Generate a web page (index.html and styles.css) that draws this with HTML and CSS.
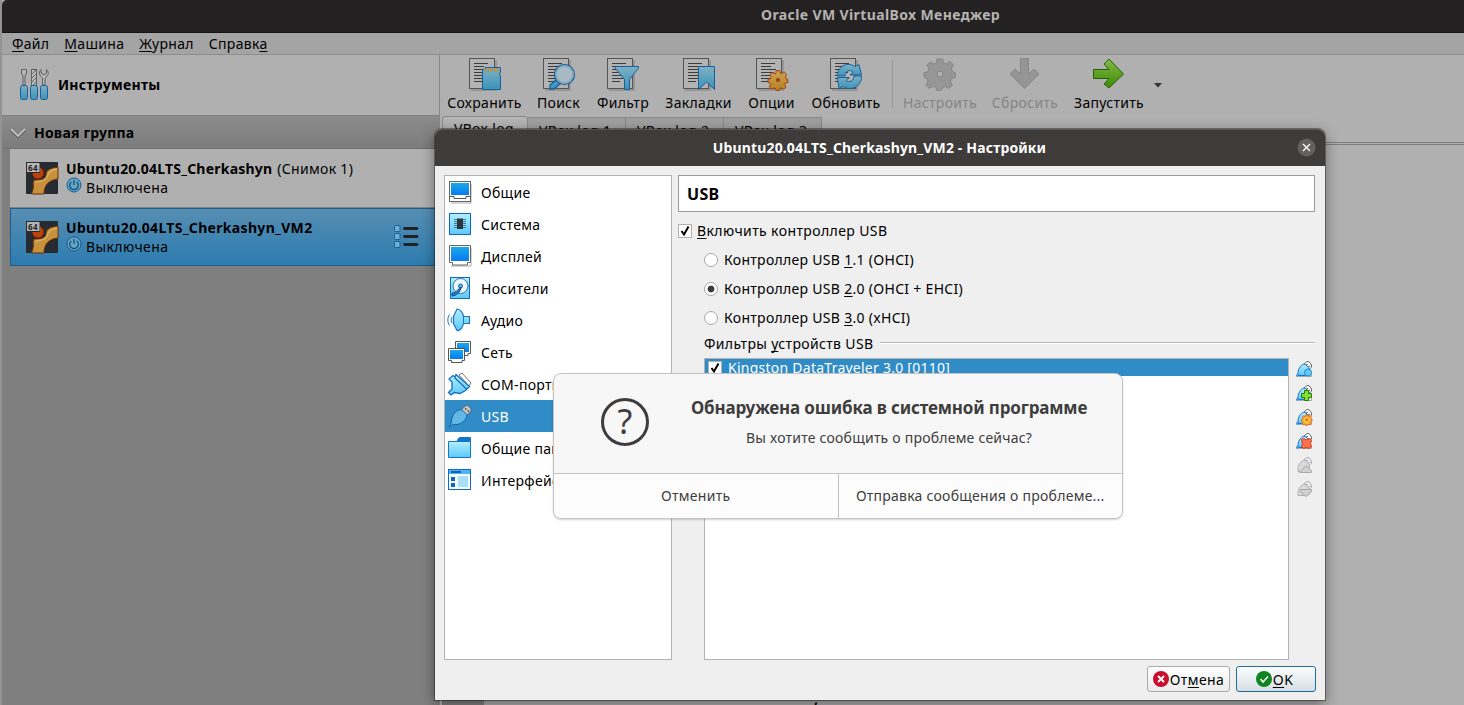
FILE: index.html
```html
<!DOCTYPE html>
<html lang="ru">
<head>
<meta charset="utf-8">
<title>Oracle VM VirtualBox Менеджер</title>
<link rel="stylesheet" href="styles.css">
</head>
<body>
<svg class="defs" width="0" height="0" aria-hidden="true">
  <defs>
    <linearGradient id="steel" x1="0" y1="0" x2="0" y2="1"><stop offset="0" stop-color="#7fb0c4"/><stop offset="1" stop-color="#3a94b8"/></linearGradient>
    <linearGradient id="sky" x1="0" y1="0" x2="0" y2="1"><stop offset="0" stop-color="#b4efff"/><stop offset="1" stop-color="#5cc8fa"/></linearGradient>
    <linearGradient id="screen" x1="0" y1="0" x2="0" y2="1"><stop offset="0" stop-color="#19a9e9"/><stop offset="1" stop-color="#0879f4"/></linearGradient>
    <linearGradient id="leaf" x1="0" y1="0" x2="0" y2="1"><stop offset="0" stop-color="#83b944"/><stop offset="1" stop-color="#3c8b06"/></linearGradient>
    <linearGradient id="gold" x1="0" y1="0" x2="0" y2="1"><stop offset="0" stop-color="#c9a45a"/><stop offset="1" stop-color="#b97f1e"/></linearGradient>
    <g id="doc">
      <path d="M3 33H28V3" fill="none" stroke="#8d8d8d" stroke-width="1.5"/>
      <rect x="1.5" y="1.500" width="25" height="30" fill="#b3b3b3" stroke="#555"/>
      <path d="M6 6.500H20M6 9.500H16M6 12.500H21M6 15.500H19M6 18.500H16M6 21.500H20M6 24.500H14" stroke="#3c3c3c"/>
    </g>
    <g id="plug">
      <path d="M3 15.500H15.500V13" stroke="#aaa" fill="none"/>
      <path d="M8 3L11 .6H13L15.500 4V6L13 8.500Z" fill="#fff" stroke="#666"/>
      <path d="M10.500 3.500h1.200M12.500 5.500h1.200" stroke="#222"/>
      <path d="M2 14C1.500 9 4 4.500 8 3C10.500 4 12.500 6 13.500 8.500V13L11 14.500H2Z" fill="url(#sky)" stroke="#1c6fc4"/>
      <circle cx="1.500" cy="14.500" r="1" fill="#64c8fa" stroke="#1c6fc4"/>
    </g>
    <g id="plug-off">
      <path d="M8 3L11 .6H13L15.500 4V6L13 8.500Z" fill="#f0f0f0" stroke="#aaa"/>
      <path d="M10.500 3.500h1.200M12.500 5.500h1.200" stroke="#888"/>
      <path d="M2 14C1.500 9 4 4.500 8 3C10.500 4 12.500 6 13.500 8.500V13L11 14.500H2Z" fill="#dadada" stroke="#b0b0b0"/>
    </g>
    <g id="os">
      <rect width="32" height="32" rx="1" fill="#262a31"/>
      <circle cx="12" cy="11" r="6" fill="#b9430d" stroke="#5d1c08"/>
      <path d="M32 5C24 6 20 8 20 13C20 17 15 18 8 18L7 21C8 24 7 28 5.500 32H18C18 24 22 18 32 17Z" fill="#c5913b" stroke="#6e2b0b"/>
      <path d="M31 7C25 8 22 10 21.500 14C20 18 15 20 9 20" fill="none" stroke="#d9b064" stroke-width="1.500"/>
      <rect x="0" y="0" width="14" height="11" fill="#262a31"/><rect x="1" y="1" width="12.500" height="9" fill="#b5b5b5"/>
      <text x="2" y="8.500" class="bits">64</text>
    </g>
    <g id="power">
      <circle cx="8" cy="8" r="7" fill="#65a7c6" stroke="#175a9a"/>
      <path d="M5.300 5A4.300 4.300 0 1 0 10.700 5M8 3V8" fill="none" stroke="#174f73" stroke-width="1.300"/>
    </g>
    <path id="cog" d="M13 1h6l1 4 3 1 3-3 4 4-2 4 1 3 3 1v5l-4 1-1 3 2 4-4 3-3-2-3 1-1 3h-5l-1-3-3-1-4 2-3-4 2-3-1-3-3-1v-5l4-1 1-3-2-4 4-3 3 2 3-1Z"/>
  </defs>
</svg>

<div class="manager">
  <div class="manager-title">Oracle VM VirtualBox Менеджер</div>
  <nav class="menubar">
    <span><u>Ф</u>айл</span><span><u>М</u>ашина</span><span><u>Ж</u>урнал</span><span>Справк<u>а</u></span>
  </nav>
  <div class="work">
    <aside class="machines">
      <div class="tools-row">
        <svg class="tools-icon" width="32" height="34" viewBox="0 0 32 34">
          <g fill="#b8b8b8" stroke="#5f5f5f"><path d="M2.500 1.500H7.500V5L6 8V17H4V8L2.500 5Z"/><rect x="12.500" y="1.500" width="5" height="16"/><path d="M22 1.500C19 5 21 8 23.500 10V17H26V10C30 7 30 4 27.500 1.500V5L25 7L22 5Z"/></g>
          <path d="M13 6L17 2M13 10L17 6M13 14L17 10M14 17L17 14" stroke="#666" fill="none"/>
          <g fill="url(#steel)" stroke="#1b5da0"><rect x="1.500" y="17.500" width="7" height="14" rx="2"/><rect x="11.500" y="17.500" width="7" height="14" rx="2"/><rect x="21.500" y="17.500" width="7" height="14" rx="2"/></g>
        </svg>
        <b>Инструменты</b>
      </div>
      <div class="group-head">
        <svg width="16" height="11" viewBox="0 0 16 11"><path d="M1 2.500L8 9.500L15 2.500" fill="none" stroke="#555" stroke-width="3"/><path d="M1 2L8 9L15 2" fill="none" stroke="#c4c4c4" stroke-width="1.800"/></svg>
        <b>Новая группа</b>
      </div>
      <div class="vm">
        <svg width="32" height="32"><use href="#os"/></svg>
        <div class="vm-text"><div class="vm-name"><b>Ubuntu20.04LTS_Cherkashyn</b><span>(Снимок 1)</span></div>
        <div class="vm-state"><svg width="16" height="16"><use href="#power"/></svg><span>Выключена</span></div></div>
      </div>
      <div class="vm vm-active">
        <svg width="32" height="32"><use href="#os"/></svg>
        <div class="vm-text"><div class="vm-name"><b class="vm2">Ubuntu20.04LTS_Cherkashyn_VM2</b></div>
        <div class="vm-state"><svg width="16" height="16"><use href="#power"/></svg><span>Выключена</span></div></div>
        <svg class="list-icon" width="26" height="26" viewBox="0 0 26 26"><g fill="#6db0d2" stroke="#185d98"><rect x="1.500" y="1.500" width="5.500" height="6" rx="1"/><rect x="1.500" y="9.500" width="5.500" height="6" rx="1"/><rect x="1.500" y="17.500" width="5.500" height="6" rx="1"/></g><path d="M11.500 4.500H24M11.500 12.500H24M11.500 20.500H24" stroke="#222" stroke-width="2.800" stroke-linecap="round"/></svg>
      </div>
    </aside>
    <main class="viewer">
      <div class="toolbar">
        <div class="tool t1"><svg width="34" height="34"><use href="#doc"/><path d="M17 10.500H32.500V15L31.500 17L32.500 19V32.500H14.500V13Z" fill="url(#steel)" stroke="#1b5da0"/><path d="M17.500 11v4M20.500 11v4M23.500 11v4M26.500 11v4M29.500 11v4" stroke="#c58a2d" stroke-width="1.500"/></svg><span>Сохранить</span></div>
        <div class="tool t2"><svg width="34" height="34"><use href="#doc"/><path d="M15 22L8 28V32H12L19 26Z" fill="#3f99bd" stroke="#1b5da0" stroke-width="1.300"/><circle cx="22.500" cy="17.500" r="10" fill="#a8b9c1" stroke="#1b5da0" stroke-width="1.200"/><circle cx="22.500" cy="17.500" r="8.500" fill="none" stroke="#79aabd" stroke-width="1.500"/></svg><span>Поиск</span></div>
        <div class="tool t3"><svg width="34" height="34"><use href="#doc"/><path d="M9 9.500H32.500V11L23.500 22.500V32.500H18.500V22.500L9 11Z" fill="url(#steel)" stroke="#1b5da0"/></svg><span>Фильтр</span></div>
        <div class="tool t4"><svg width="34" height="34"><use href="#doc"/><path d="M16.500 9.500H32.500V32.500L24.500 25L16.500 32.500Z" fill="url(#steel)" stroke="#1b5da0"/></svg><span>Закладки</span></div>
        <div class="tool t5"><svg width="34" height="34"><use href="#doc"/><use href="#cog" transform="translate(13 13) scale(.62)" fill="url(#gold)" stroke="#a4400d" stroke-width="1.600"/><circle cx="23" cy="23" r="2" fill="#9c3b0b"/></svg><span>Опции</span></div>
        <div class="tool t6"><svg width="34" height="34"><use href="#doc"/><path d="M8.500 19C8 10 18 4 26 9.500L30 7.500L32.500 18H21L24 15C21 12 16 14 16 19Z" fill="url(#steel)" stroke="#1b5da0"/><path d="M32.500 19C33 29 22 35 14 29.500L10 32L8.500 20.500H20L17 23.500C20 26 25 24 25 19Z" fill="url(#steel)" stroke="#1b5da0"/></svg><span>Обновить</span></div>
        <i class="tool-sep"></i>
        <div class="tool t7 off"><svg width="34" height="34"><use href="#cog" transform="translate(1 1) scale(.98)" fill="#969696" stroke="#858585"/><circle cx="17" cy="17" r="3" fill="#b0b0b0" stroke="#828282"/></svg><span>Настроить</span></div>
        <div class="tool t8 off"><svg width="34" height="34"><path d="M12.500 1.500H20.500V17L26 12L31 17L16.500 31.500L2 17L7 12L12.500 17Z" fill="#959595" stroke="#868686"/></svg><span>Сбросить</span></div>
        <div class="tool t9"><svg width="34" height="34"><path d="M1.500 12.500H17L12 7L17 2L31.500 17L17 31L12 27L17 21.500H1.500Z" fill="url(#leaf)" stroke="#276103"/></svg><span>Запустить</span></div>
        <svg class="drop" width="8" height="5"><path d="M0 0H8L4 4.500Z" fill="#333"/></svg>
      </div>
      <div class="tabs"><span class="tab tab-on">VBox.log</span><span class="tab">VBox.log.1</span><span class="tab">VBox.log.2</span><span class="tab">VBox.log.3</span></div>
      <div class="pane"><div class="log"><div class="gutter"></div><span class="log-line">,</span></div></div>
    </main>
  </div>
</div>

<section class="settings">
  <header class="settings-title"><span>Ubuntu20.04LTS_Cherkashyn_VM2 - Настройки</span>
    <svg class="close" width="19" height="19"><circle cx="9.500" cy="9.500" r="9" fill="#626161"/><path d="M6 6L13 13M13 6L6 13" stroke="#fff" stroke-width="1.400"/></svg></header>
  <div class="settings-body">
    <ul class="pages">
      <li><svg width="24" height="24"><path d="M3 23H23V4" stroke="#aaa" fill="none"/><rect x="1.500" y="1.500" width="21" height="20" fill="#fff" stroke="#666"/><rect x="3" y="3" width="18" height="12" fill="url(#screen)"/><path d="M2 16.500H6V18.500H18V16.500H22" fill="none" stroke="#555"/></svg><span>Общие</span></li>
      <li><svg width="24" height="24"><rect x="1.500" y="1.500" width="21" height="21" fill="url(#sky)" stroke="#0e6bbf"/><path d="M6 7.500H18M6 9.500H18M6 11.500H18M6 13.500H18M6 15.500H18" stroke="#3181b6"/><rect x="9" y="6.500" width="6" height="10.500" fill="#30343c"/></svg><span>Система</span></li>
      <li><svg width="24" height="24"><path d="M3 22H23V4" stroke="#aaa" fill="none"/><path d="M1.500 1.500H22.500V18.500H19.500V21H4.500V18.500H1.500Z" fill="#fff" stroke="#666"/><rect x="3" y="3" width="18" height="14" fill="url(#screen)"/></svg><span>Дисплей</span></li>
      <li><svg width="24" height="24"><rect x="2.500" y="1.500" width="19" height="21" fill="url(#sky)" stroke="#0e6bbf"/><circle cx="12.500" cy="10" r="7.500" fill="#eef9ff" stroke="#2a73a6"/><circle cx="12.500" cy="10" r="2" fill="#6cbdf0" stroke="#115c9c"/><path d="M13 11C13 16 8 20 4 20L4 17C8 17 9 14 13 11Z" fill="#2a78bd" stroke="#0b4f94"/></svg><span>Носители</span></li>
      <li><svg width="24" height="24"><path d="M5.500 8.500L9 1C12 1 15 5 15.500 8.500H21.500V15.500H15.500C15 19 12 23 9 22.500L5.500 15.500Z" fill="url(#sky)" stroke="#1976c7" stroke-width="1.200"/><path d="M15.500 8V16M4 9Q2 12 4 15M1.500 6.500Q-2 12 1.500 17.500" fill="none" stroke="#1976c7"/></svg><span>Аудио</span></li>
      <li><svg width="24" height="24"><path d="M7.500 1.500H22.500V13.500H20V15.500H7.500Z" fill="#fff" stroke="#555"/><rect x="9" y="3" width="12" height="9" fill="url(#screen)"/><path d="M.5 8.500H16.500V20.500H14V22.500H3.500V20.500H.5Z" fill="#fff" stroke="#555"/><rect x="2" y="10" width="13" height="9" fill="url(#screen)"/></svg><span>Сеть</span></li>
      <li><svg width="24" height="24"><path d="M11 3L14 1L23 11L21 14Z" fill="#fff" stroke="#777"/><path d="M8 2.500L21.500 14.500L17.500 18.500L12 21.500L6.500 20.500L3 23L.5 20.500L4 17V10L1 7L5 3.500L7 5Z" fill="url(#sky)" stroke="#176eb8" stroke-width="1.300"/><path d="M6.500 5.500L18.500 17" stroke="#176eb8" stroke-width="1.300"/></svg><span>COM-порты</span></li>
      <li class="sel"><svg width="24" height="24"><path d="M13 6L18 1.500H20L23 5V7L18.500 11.500Z" fill="#cacaca" stroke="#5c6972"/><path d="M17 5h1.500M19.500 7h1.500" stroke="#333" stroke-width="1.500"/><path d="M1 23L3.500 18.500C3 12 7 7 12.500 5.500C16 7 18 9 19 12C17 18 11 21.500 5 20.500Z" fill="#63b7e6" stroke="#1765a5"/></svg><span>USB</span></li>
      <li><svg width="24" height="24"><path d="M9.500 4L11.500 1.500H22.500V5H9.500Z" fill="#1276c8" stroke="#1276c8"/><path d="M.5 5.500H22.500V21.500H.5Z" fill="url(#sky)" stroke="#1276c8"/></svg><span>Общие папки</span></li>
      <li><svg width="24" height="24"><rect x=".5" y="1.500" width="22" height="20" fill="#f6fbff" stroke="#1268c0"/><rect x="1" y="2" width="21" height="4" fill="#4bb6f3"/><path d="M3 4H13" stroke="#0c63b7" stroke-width="2"/><path d="M3 9h4v4H3ZM3 15h4v4H3Z" fill="#0865cc"/><rect x="10" y="8" width="10" height="11" fill="#a9dffa"/></svg><span>Интерфейс</span></li>
    </ul>
    <div class="page">
      <div class="page-title">USB</div>
      <label class="enable"><i class="check"><svg width="12" height="12"><path d="M2.500 6L5 9.500L9.500 1.500" fill="none" stroke="#000" stroke-width="2"/></svg></i><span><u>В</u>ключить контроллер USB</span></label>
      <label class="radio"><i></i><span>Контроллер USB <u>1</u>.1 (OHCI)</span></label>
      <label class="radio on"><i></i><span>Контроллер USB <u>2</u>.0 (OHCI + EHCI)</span></label>
      <label class="radio"><i></i><span>Контроллер USB <u>3</u>.0 (xHCI)</span></label>
      <div class="filters-head"><span>Фильтры <u>у</u>стройств USB</span><i></i></div>
      <div class="filters">
        <div class="filter-list"><div class="filter"><i class="check"><svg width="12" height="12"><path d="M2.500 6L5 9.500L9.500 1.500" fill="none" stroke="#000" stroke-width="2"/></svg></i><span>Kingston DataTraveler 3.0 [0110]</span></div></div>
        <div class="filter-tools">
          <svg width="17" height="17"><use href="#plug"/><circle cx="12" cy="11.500" r="3.500" fill="#62cbfc" stroke="#2586d5"/></svg>
          <svg width="17" height="17"><use href="#plug"/><path d="M8.500 5.500h4v3h3v4h-3v3h-4v-3h-3v-4h3Z" fill="#88dd2b" stroke="#237d0a"/></svg>
          <svg width="17" height="17"><use href="#plug"/><use href="#cog" transform="translate(5.500 5.500) scale(.33)" fill="#ffb83c" stroke="#dc6411" stroke-width="3"/><circle cx="10.700" cy="10.700" r="1" fill="#b04a0b"/></svg>
          <svg width="17" height="17"><use href="#plug"/><path d="M5.500 6.500L7.500 5.500L10.500 7L13.500 5.500L15.500 7.500L14.500 10.500L15.500 13.500L13 15.500L10.500 14.500L7.500 15.500L5.500 13.500L6.500 10.500Z" fill="#ff704f" stroke="#d83416"/></svg>
          <svg width="17" height="17"><use href="#plug-off"/><path d="M3.500 15.500L10 8.500L15.500 13.500V15.500Z" fill="#d0d0d0" stroke="#aaa"/></svg>
          <svg width="17" height="17"><use href="#plug-off"/><path d="M4.500 8.500H15.500V11L10 15.500L4.500 11Z" fill="#d0d0d0" stroke="#aaa"/></svg>
        </div>
      </div>
    </div>
  </div>
  <footer class="actions">
    <button class="btn cancel"><svg width="16" height="16"><circle cx="8" cy="8" r="8" fill="#c8102e"/><path d="M5 5L11 11M11 5L5 11" stroke="#fff" stroke-width="1.800"/></svg><span>От<u>м</u>ена</span></button>
    <button class="btn ok"><svg width="16" height="16"><circle cx="8" cy="8" r="8" fill="#0f8420"/><path d="M4.500 8L7 11L12 5.500" fill="none" stroke="#fff" stroke-width="1.500"/></svg><span><u>O</u>K</span></button>
  </footer>
</section>

<section class="alert">
  <div class="alert-main">
    <div class="question">?</div>
    <div class="alert-text"><h1>Обнаружена ошибка в системной программе</h1><p>Вы хотите сообщить о проблеме сейчас?</p></div>
  </div>
  <div class="alert-actions"><div><span>Отменить</span></div><div><span>Отправка сообщения о проблеме...</span></div></div>
</section>
</body>
</html>
```

FILE: styles.css
```css
* { box-sizing: border-box; }
body { margin: 0; width: 1464px; height: 705px; overflow: hidden; position: relative; background: #b0b0b0; font: 14px/20px "Noto Sans", sans-serif; letter-spacing: .3px; color: #000; }
.defs { position: absolute; }
svg { display: block; flex: none; overflow: visible; }
span, b { white-space: nowrap; }
u { text-decoration: underline; text-underline-offset: 2px; text-decoration-thickness: 1px; text-decoration-skip-ink: none; }
.bits { font: bold 8px "Noto Sans", sans-serif; fill: #222; letter-spacing: .5px; }

.manager { height: 705px; border-left: 2px solid #939393; display: flex; flex-direction: column; }
.manager-title { height: 33px; flex: none; background: #232122; border-bottom: 1px solid #151515; border-top-left-radius: 5px; color: #b5b3b0; font-weight: 700; text-align: center; line-height: 30px; padding-left: 295px; letter-spacing: .38px; }
.menubar { height: 22px; flex: none; background: #a4a4a4; border-bottom: 1px solid #8d8d8d; display: flex; padding-left: 10px; gap: 15px; line-height: 21px; }
.work { flex: 1; display: flex; min-height: 0; }
.machines { width: 438px; flex: none; background: #7f7f7f; border-right: 1px solid #888; }
.tools-row { height: 60px; background: #b0b0b0; display: flex; align-items: center; padding-left: 17px; gap: 7px; }
.group-head { height: 34px; border-top: 1px solid #818181; background: linear-gradient(#8c8c8c, #7c7c7c); border-bottom: 1px solid #6f6f6f; display: flex; align-items: center; padding: 1px 0 0 8px; gap: 8px; letter-spacing: .2px; }
.vm { height: 59px; margin-left: 8px; background: #b0b0b0; border-bottom: 1px solid #838383; display: flex; align-items: flex-start; padding: 13px 0 0 16px; gap: 8px; }
.vm-active { height: 58px; border: 1px solid #1d5d86; border-right: 0; padding: 12px 0 0 15px; background: linear-gradient(#578eb3, #2c7cb0); }
.vm-text { margin-top: -3px; }
.vm-name { height: 20px; display: flex; gap: 5px; }
.vm-name b { letter-spacing: .22px; }
.vm-name .vm2 { letter-spacing: .33px; }
.vm-state { height: 18px; display: flex; gap: 4px; line-height: 17px; letter-spacing: .4px; }
.vm-state svg { margin-top: -2px; }
.list-icon { margin: 3px 20px 0 auto; }

.viewer { flex: 1; display: flex; flex-direction: column; min-width: 0; }
.toolbar { height: 61px; display: flex; padding: 2px 0 0 7px; }
.tool { display: flex; flex-direction: column; align-items: center; }
.tool span { line-height: 24px; }
.off { color: #858585; }
.t1 { width: 75px; margin-right: 15px; } .t2 { width: 43px; margin-right: 16px; } .t3 { width: 54px; margin-right: 15px; }
.t4 { width: 67px; margin-right: 16px; } .t5 { width: 47px; margin-right: 16px; } .t6 { width: 70px; margin-right: 11px; }
.tool-sep { width: 1px; height: 48px; margin: 3px 10px 0 0; background: #999; }
.t7 { width: 74px; margin-right: 15px; } .t8 { width: 66px; margin-right: 16px; } .t9 { width: 70px; margin-right: 10px; }
.drop { margin-top: 26px; }
.tabs { height: 26px; display: flex; align-items: flex-end; padding-left: 2px; }
.tab { height: 25px; width: 98px; background: #9f9f9f; border: 1px solid #888; border-left: 0; padding-left: 11px; line-height: 26px; }
.tab-on { height: 26px; width: 86px; background: linear-gradient(#b6b6b6, #a9a9a9); border-left: 1px solid #888; border-radius: 3px 3px 0 0; line-height: 24px; }
.pane { flex: 1; border-top: 1px solid #7d7d7d; padding: 1px 0 0 2px; }
.log { height: 100%; border: 1px solid #7d7d7d; border-right: 0; border-bottom: 0; position: relative; }
.gutter { width: 41px; height: 100%; background: #828282; }
.log-line { position: absolute; left: 371px; bottom: -4px; font-weight: 700; }

.settings { position: absolute; left: 435px; top: 129px; width: 890px; height: 571px; background: #efefef; border-radius: 7px 7px 0 0; box-shadow: 0 0 0 1px rgba(0,0,0,.35), 0 4px 14px rgba(0,0,0,.45); display: flex; flex-direction: column; }
.settings-title { height: 37px; flex: none; background: #3e3c3a; border-top: 1px solid #555; border-radius: 7px 7px 0 0; color: #fff; font-weight: 700; display: flex; align-items: center; justify-content: center; position: relative; letter-spacing: .15px; }
.settings-title span { padding-right: 1px; }
.close { position: absolute; right: 9px; top: 8px; }
.settings-body { display: flex; padding: 9px 10px 0 9px; height: 494px; }
.pages { width: 228px; height: 485px; margin: 0 6px 0 0; padding: 0; list-style: none; background: #fff; border: 1px solid #b2b2b2; }
.pages li { height: 32px; display: flex; align-items: center; padding-left: 3px; gap: 9px; }
.pages li span { padding-top: 2px; }
.sel { background: #308cc6; color: #fff; }
.page { flex: 1; display: flex; flex-direction: column; }
.page-title { height: 37px; border: 1px solid #9b9b9b; background: #fff; font-size: 16px; font-weight: 700; line-height: 36px; padding-left: 8px; }
.enable { height: 20px; margin-top: 9px; display: flex; align-items: center; gap: 5px; letter-spacing: .4px; }
.check { width: 14px; height: 14px; background: #fff; border: 1px solid #b0b0b0; flex: none; }
.radio { height: 20px; margin: 9px 0 0 26px; display: flex; align-items: center; gap: 6px; }
.radio i { width: 14px; height: 14px; border-radius: 50%; border: 1px solid #a9a9a9; background: #fff; }
.radio.on i { background: radial-gradient(circle, #3b3b3b 3px, #fff 3.800px); }
.filters-head { height: 20px; margin: 6px 0 0 26px; display: flex; gap: 7px; letter-spacing: .35px; }
.filters-head i { flex: 1; height: 2px; margin-top: 8px; background: #b8b8b8; border-bottom: 1px solid #fff; }
.filters { display: flex; margin: 4px 0 0 26px; gap: 7px; }
.filter-list { width: 585px; height: 302px; background: #fff; border: 1px solid #b2b2b2; }
.filter { height: 17px; background: #308cc6; color: #fff; display: flex; align-items: center; padding: 1px 0 0 3px; gap: 6px; letter-spacing: .25px; }
.filter-tools { display: flex; flex-direction: column; gap: 7px; padding-top: 3px; }
.actions { display: flex; justify-content: flex-end; gap: 6px; padding: 6px 9px 0 0; }
.btn { height: 26px; border: 1px solid #aaa; border-radius: 3px; background: linear-gradient(#fff, #ebebeb); font: 14px/22px "Noto Sans", sans-serif; letter-spacing: .4px; padding: 0 0 1px; display: flex; align-items: center; justify-content: center; gap: 1px; color: #000; }
.btn span { padding-top: 2px; }
.cancel { width: 83px; }
.ok { width: 80px; padding-right: 3px; border-color: #236b9c; background: linear-gradient(#fbfdfe, #d6dee2); }

.alert { position: absolute; left: 553px; top: 373px; width: 570px; height: 146px; border: 1px solid #c3c3c3; border-radius: 8px; background: #f7f7f7; box-shadow: 0 1px 2px rgba(0,0,0,.18); overflow: hidden; color: #3d3d3d; }
.alert-main { height: 99px; display: flex; padding: 24px 0 0 47px; }
.question { width: 48px; height: 48px; flex: none; border: 3px solid #3d3d3d; border-radius: 50%; font-size: 34px; line-height: 41px; text-align: center; }
.alert-text { flex: 1; text-align: center; padding-right: 35px; margin-left: 42px; white-space: nowrap; }
.alert-text h1 { margin: 0; font-size: 17px; line-height: 20px; letter-spacing: -.16px; }
.alert-text p { margin: 10px 0 0; line-height: 20px; letter-spacing: .22px; }
.alert-actions { height: 45px; border-top: 1px solid #c3c3c3; background: #fcfcfc; display: flex; line-height: 43px; text-align: center; }
.alert-actions div { flex: 1; }
.alert-actions div + div { border-left: 1px solid #c3c3c3; letter-spacing: .25px; }
```
